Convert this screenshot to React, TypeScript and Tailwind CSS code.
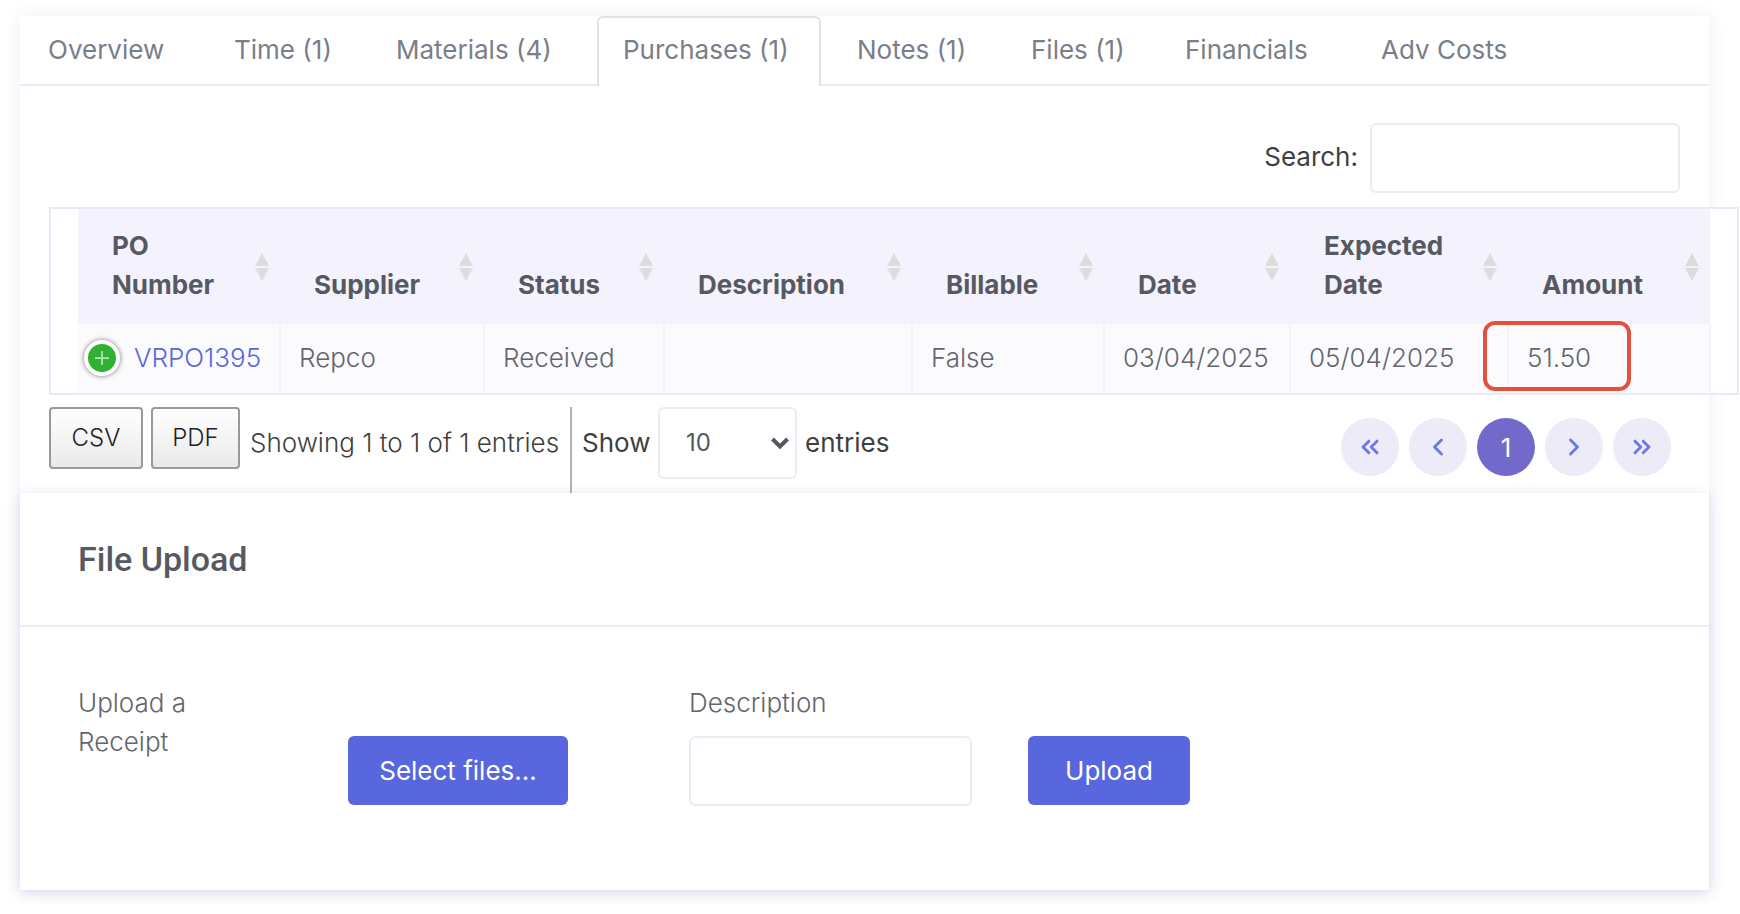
import { ChevronLeft, ChevronRight, ChevronsLeft, ChevronsRight } from "lucide-react";

const tabs = [
    { label: "Overview", width: "w-[176px]" },
    { label: "Time (1)", width: "w-[152px]" },
    { label: "Materials (4)", width: "w-[217px]" },
    { label: "Purchases (1)", width: "w-[224px]", active: true },
    { label: "Notes (1)", width: "w-[164px]" },
    { label: "Files (1)", width: "w-[144px]" },
    { label: "Financials", width: "w-[186px]" },
    { label: "Adv Costs", width: "w-[186px]" },
];

const columns = [
    { label: "PO Number", width: "w-[202px]" },
    { label: "Supplier", width: "w-[204px]" },
    { label: "Status", width: "w-[180px]" },
    { label: "Description", width: "w-[248px]" },
    { label: "Billable", width: "w-[192px]" },
    { label: "Date", width: "w-[186px]" },
    { label: "Expected Date", width: "w-[218px]" },
    { label: "Amount", width: "w-[202px]" },
];

const cell = "h-[69px] border-r-2 border-[#f4f3fb] pb-0.5 pl-[18px]";
const field = "h-[70px] rounded-md border-2 border-[#ebedf6] bg-white px-5 outline-none";
const primary = "h-[69px] rounded-md bg-[#5867dd] text-white cursor-pointer";
const pager = "flex size-[58px] items-center justify-center rounded-full bg-[#eeebf8] text-[#6b79e1]";

const SortIcon = () => (
    <svg viewBox="0 0 16 28" className="absolute right-2.5 top-11 h-7 w-4" fill="#dcdcdc">
        <path d="M8 0 15 13H1Z" />
        <path d="M1 15h14L8 28Z" />
    </svg>
);

const Tabs = () => (
    <nav className="flex h-[70px] gap-2.5 border-b-2 border-[#ebe9f5] pl-0.5">
        {tabs.map((tab) => (
            <a
                key={tab.label}
                href="#"
                className={
                    tab.active
                        ? `${tab.width} -mb-0.5 shrink-0 whitespace-nowrap rounded-t-md border-2 border-b-0 border-[#e2e2e5] bg-white pl-6 pt-3`
                        : `${tab.width} shrink-0 whitespace-nowrap pl-[26px] pt-3.5`
                }
            >
                {tab.label}
            </a>
        ))}
    </nav>
);

const PurchasesTable = () => (
    <div className="-mr-[59px] border-2 border-[#ebe9f9] bg-white px-[27px]">
        <table className="w-full table-fixed border-collapse text-left">
            <thead>
                <tr className="bg-[#f4f2fc] text-[#575962]">
                    {columns.map((col) => (
                        <th key={col.label} className={`${col.width} relative h-[115px] pb-5 pl-[34px] pr-12 pt-3.5 align-bottom font-bold`}>
                            {col.label}
                            <SortIcon />
                        </th>
                    ))}
                </tr>
            </thead>
            <tbody>
                <tr className="bg-[#fbfbfe] font-light text-[#63656e]">
                    <td className="h-[69px] border-r-2 border-[#f4f3fb] pb-0.5 pl-1.5">
                        <div className="flex items-center gap-3.5">
                            <button aria-label="Expand row" className="flex size-9 shrink-0 items-center justify-center rounded-full border-4 border-white bg-[#31b131] shadow-[0_0_5px_#777]">
                                <svg viewBox="0 0 12 12" className="size-3.5" stroke="#b5e3b5" strokeWidth="1.5">
                                    <path d="M6 0v12M0 6h12" />
                                </svg>
                            </button>
                            <a href="#" className="text-[#5867dd]">VRPO1395</a>
                        </div>
                    </td>
                    <td className={cell}>Repco</td>
                    <td className={cell}>Received</td>
                    <td className={cell}></td>
                    <td className={cell}>False</td>
                    <td className={cell}>03/04/2025</td>
                    <td className={cell}>05/04/2025</td>
                    <td className={`${cell} relative`}>
                        51.50
                        <span className="absolute -left-[26px] -top-[3px] h-[70px] w-[148px] rounded-xl border-4 border-[#e5503c]" />
                    </td>
                </tr>
            </tbody>
        </table>
    </div>
);

const TableFooter = () => {
    const exportButton = "h-[62px] rounded-sm border-2 border-[#999] bg-linear-to-b from-white to-[#e9e9e9] text-2xl font-light text-[#222]";
    return (
        <div className="mt-3 flex items-start text-[#3f3f3f]">
            <button className={`${exportButton} w-[94px]`}>CSV</button>
            <button className={`${exportButton} ml-2 w-[89px]`}>PDF</button>
            <p className="ml-2.5 w-[320px] whitespace-nowrap pt-4 font-light">Showing 1 to 1 of 1 entries</p>
            <label className="flex h-[86px] items-start border-l-2 border-[#b0b0b0] pl-2.5">
                <span className="w-[76px] pt-4">Show</span>
                <span className="relative">
                    <select className="h-[72px] w-[139px] appearance-none rounded-md border-2 border-[#ebedf6] bg-white pl-[26px] text-2xl text-[#575962]" defaultValue="10">
                        <option>10</option>
                        <option>25</option>
                        <option>50</option>
                    </select>
                    <svg viewBox="0 0 18 12" className="pointer-events-none absolute right-2 top-[30px] h-3 w-[18px]" fill="none" stroke="#575962" strokeWidth="4">
                        <path d="M1.5 2 9 9.5 16.5 2" />
                    </svg>
                </span>
                <span className="pl-2 pt-4">entries</span>
            </label>
            <nav className="ml-auto mr-[9px] mt-[11px] flex gap-2.5">
                <a href="#" aria-label="First" className={pager}><ChevronsLeft size={28} strokeWidth={2.5} /></a>
                <a href="#" aria-label="Previous" className={pager}><ChevronLeft size={28} strokeWidth={2.5} /></a>
                <a href="#" className="flex size-[58px] items-center justify-center rounded-full bg-[#716aca] text-white">1</a>
                <a href="#" aria-label="Next" className={pager}><ChevronRight size={28} strokeWidth={2.5} /></a>
                <a href="#" aria-label="Last" className={pager}><ChevronsRight size={28} strokeWidth={2.5} /></a>
            </nav>
        </div>
    );
};

const FileUpload = () => (
    <section className="relative bg-white">
        <h3 className="border-b-2 border-[#ebedf2] px-[58px] py-[46px] font-[Roboto,sans-serif] text-[34px] font-medium leading-10 text-[#575962]">
            File Upload
        </h3>
        <div className="flex items-start px-[58px] pb-[84px] pt-14 font-light text-[#63656e]">
            <p className="w-[270px] pr-[130px]">Upload a Receipt</p>
            <button className={`${primary} mt-[53px] w-[220px] font-normal`}>Select files…</button>
            <div className="ml-[121px] flex w-[283px] flex-col gap-3.5">
                <label htmlFor="description">Description</label>
                <input id="description" type="text" className={field} />
            </div>
            <button className={`${primary} ml-14 mt-[53px] w-[162px] font-normal`}>Upload</button>
        </div>
    </section>
);

const App = () => {
    return <>
        <div className="overflow-hidden bg-white pb-6 font-[Inter,sans-serif] text-[26px] leading-[39px]">
            <main className="ml-5 mr-[31px] mt-4 bg-white text-[#7b7e8a] shadow-[0_1px_16px_rgba(88,77,190,0.1)]">
                <Tabs />
                <div className="px-[29px] pt-[37px]">
                    <label className="mb-3.5 flex items-center justify-end gap-3 text-[#3f3f3f]">
                        <span className="pb-1">Search:</span>
                        <input type="search" className={`${field} w-[310px]`} />
                    </label>
                    <PurchasesTable />
                    <TableFooter />
                </div>
                <div className="shadow-[0_2px_12px_rgba(88,77,190,0.18)]">
                    <FileUpload />
                </div>
            </main>
        </div>
    </>
}

export default App;
